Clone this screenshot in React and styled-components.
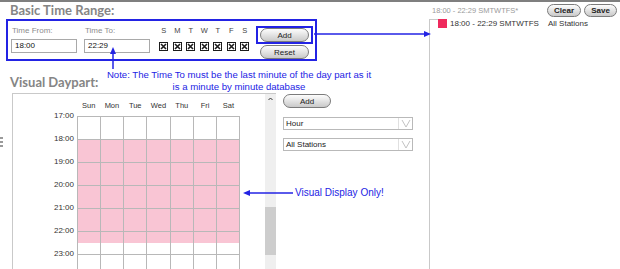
import styled, { createGlobalStyle } from "styled-components";

const GlobalStyle = createGlobalStyle`
    body {
        margin: 0;
        background: #fff;
        font-family: "Liberation Sans", Arial, sans-serif;
    }
`;

const BLUE = "#2323e4";

const Page = styled.div`
    position: relative;
    width: 620px;
    height: 269px;
    overflow: hidden;
    background: #fff;
`;

const TopRule = styled.div`
    height: 2px;
    background: #7f7f7f;
`;

const Main = styled.div`
    display: flex;
    height: 267px;
`;

const LeftCol = styled.div`
    width: 429px;
    display: flex;
    flex-direction: column;
`;

const SectionTitle = styled.div`
    padding-left: 10px;
    height: ${(p) => p.$h}px;
    line-height: ${(p) => p.$h}px;
    font-family: "Lato", "Open Sans", sans-serif;
    font-weight: 700;
    font-size: 13px;
    color: #858585;
    padding-top: ${(p) => p.$pt || 0}px;
`;

const FormBox = styled.div`
    margin-left: 6px;
    width: 311px;
    height: 43px;
    box-sizing: border-box;
    border: 2px solid ${BLUE};
    display: flex;
    align-items: flex-start;
    padding: 5px 2px 0 3px;
`;

const Field = styled.div`
    display: flex;
    flex-direction: column;
    width: 66px;
    margin-right: ${(p) => p.$mr || 0}px;
`;

const FieldLabel = styled.div`
    font-size: 8px;
    line-height: 10px;
    color: #8c8c8c;
    padding-left: 1px;
`;

const TextBox = styled.div`
    margin-top: 3px;
    height: 14px;
    box-sizing: border-box;
    border: 1px solid #a9a9a9;
    font-size: 8px;
    line-height: 12px;
    padding-left: 3px;
    color: #111;
`;

const Days = styled.div`
    display: grid;
    grid-template-columns: repeat(7, 13.5px);
    align-content: start;
    margin-left: 7px;
    justify-items: center;
`;

const DayLetter = styled.div`
    font-size: 7.5px;
    line-height: 10px;
    color: #444;
`;

const CheckCell = styled.div`
    margin-top: 6px;
    width: 9px;
    height: 9px;
    display: flex;
`;

const ButtonCol = styled.div`
    margin-left: auto;
    display: flex;
    flex-direction: column;
`;

const Highlight = styled.div`
    border: 2px solid ${BLUE};
    padding: 0 2px;
`;

const Button = styled.div`
    width: ${(p) => p.$w || 49}px;
    height: ${(p) => p.$h || 14}px;
    box-sizing: border-box;
    border: 1px solid #7b7b7b;
    border-radius: 7px;
    background: linear-gradient(#fdfdfd, #e6e6e6 45%, #c9c9c9);
    font-size: 8px;
    font-weight: ${(p) => (p.$bold ? 700 : 400)};
    color: #222;
    display: flex;
    align-items: center;
    justify-content: center;
    margin-left: ${(p) => p.$ml || 0}px;
    margin-top: ${(p) => p.$mt || 0}px;
`;

const Separator = styled.div`
    margin: 5px 0 0 12px;
    width: 406px;
    height: 1px;
    background: #bdbdbd;
`;

const ChartRow = styled.div`
    display: flex;
    flex: 1;
`;

const Grip = styled.div`
    width: 12px;
    padding-top: 44px;
    display: flex;
    flex-direction: column;
    gap: 2px;
`;

const GripDash = styled.div`
    width: 3px;
    height: 2px;
    background: #9a9a9a;
`;

const ChartPanel = styled.div`
    width: 263px;
    border-left: 1px solid #c9c9c9;
    border-top: 1px solid #c9c9c9;
    display: flex;
`;

const ChartContent = styled.div`
    flex: 1;
    display: flex;
    flex-direction: column;
`;

const DayHeader = styled.div`
    margin-left: 64px;
    width: 163px;
    height: 22px;
    display: grid;
    grid-template-columns: repeat(7, 1fr);
    align-items: center;
    justify-items: center;
`;

const DayName = styled.div`
    font-size: 7.5px;
    color: #333;
`;

const BodyRow = styled.div`
    display: flex;
`;

const HourLabels = styled.div`
    width: 64px;
    margin-top: -5px;
    display: flex;
    flex-direction: column;
`;

const HourLabel = styled.div`
    height: 23px;
    line-height: 10px;
    font-size: 8px;
    color: #333;
    text-align: right;
    padding-right: 3px;
`;

const Grid = styled.div`
    width: 163px;
    display: grid;
    grid-template-columns: repeat(7, 1fr);
    border-left: 1px solid #b8b8b8;
    border-top: 1px solid #b8b8b8;
    box-sizing: border-box;
`;

const Cell = styled.div`
    height: 23px;
    box-sizing: border-box;
    border-right: 1px solid #b8b8b8;
    border-bottom: 1px solid #b8b8b8;
    background: ${(p) =>
        p.$fill >= 1
            ? "#f9c5d4"
            : p.$fill > 0
            ? `linear-gradient(#f9c5d4 ${p.$fill * 100}%, #fff ${p.$fill * 100}%)`
            : "#fff"};
`;

const Scrollbar = styled.div`
    width: 11px;
    background: #efefef;
    display: flex;
    flex-direction: column;
    align-items: center;
`;

const ScrollThumb = styled.div`
    margin-top: 101px;
    width: 11px;
    height: 48px;
    background: #cdcdcd;
`;

const SideControls = styled.div`
    margin-left: 7px;
    padding-top: 1px;
    width: 130px;
    display: flex;
    flex-direction: column;
`;

const SelectBox = styled.div`
    margin-top: ${(p) => p.$mt}px;
    height: 13px;
    box-sizing: border-box;
    border: 1px solid #b9b9b9;
    display: flex;
    font-size: 8px;
    color: #222;
`;

const SelectText = styled.div`
    flex: 1;
    line-height: 11px;
    padding-left: 2px;
`;

const SelectArrow = styled.div`
    width: 13px;
    border-left: 1px solid #e0e0e0;
    display: flex;
    align-items: center;
    justify-content: center;
`;

const RightCol = styled.div`
    flex: 1;
    display: flex;
    flex-direction: column;
`;

const RightHeader = styled.div`
    height: 17px;
    display: flex;
    align-items: center;
    padding: 0 3px 0 3px;
    gap: 3px;
`;

const Summary = styled.div`
    flex: 1;
    font-size: 7.5px;
    color: #9a9a9a;
`;

const TreeBox = styled.div`
    flex: 1;
    border-left: 1px solid #c9c9c9;
`;

const TreeItem = styled.div`
    display: flex;
    align-items: flex-start;
    font-size: 8px;
    color: #333;
`;

const Connector = styled.div`
    width: 8px;
    height: 1px;
    background: #c9c9c9;
`;

const Swatch = styled.div`
    width: 9px;
    height: 9px;
    background: #ef2a5d;
    margin-right: 3px;
`;

const ItemText = styled.div`
    width: 98px;
    line-height: 10px;
`;

const Overlay = styled.svg`
    position: absolute;
    left: 0;
    top: 0;
    pointer-events: none;
`;

const Note = styled.div`
    position: absolute;
    left: ${(p) => p.$x}px;
    top: ${(p) => p.$y}px;
    width: ${(p) => p.$w}px;
    text-align: ${(p) => p.$align || "left"};
    font-size: ${(p) => p.$size || 10}px;
    line-height: 12px;
    color: ${BLUE};
`;

const days = ["Sun", "Mon", "Tue", "Wed", "Thu", "Fri", "Sat"];
const hours = [
    { h: "17:00", fill: 0 },
    { h: "18:00", fill: 1 },
    { h: "19:00", fill: 1 },
    { h: "20:00", fill: 1 },
    { h: "21:00", fill: 1 },
    { h: "22:00", fill: 0.5 },
    { h: "23:00", fill: 0 },
];

function CheckMark() {
    return (
        <svg width="9" height="9" viewBox="0 0 9 9">
            <rect x="0.5" y="0.5" width="8" height="8" fill="#fff" stroke="#1c1c1c" />
            <path d="M2 2L7 7M7 2L2 7" stroke="#1c1c1c" strokeWidth="1.6" />
        </svg>
    );
}

function Chevron() {
    return (
        <svg width="10" height="9" viewBox="0 0 10 9">
            <polyline points="1,1 5,8 9,1" fill="none" stroke="#c3c3c3" strokeWidth="1" />
        </svg>
    );
}

export default function App() {
    return (
        <Page>
            <GlobalStyle />
            <TopRule />
            <Main>
                <LeftCol>
                    <SectionTitle $h={17}>Basic Time Range:</SectionTitle>
                    <FormBox>
                        <Field $mr={7}>
                            <FieldLabel>Time From:</FieldLabel>
                            <TextBox>18:00</TextBox>
                        </Field>
                        <Field>
                            <FieldLabel>Time To:</FieldLabel>
                            <TextBox>22:29</TextBox>
                        </Field>
                        <Days>
                            {["S", "M", "T", "W", "T", "F", "S"].map((d, i) => (
                                <DayLetter key={"l" + i}>{d}</DayLetter>
                            ))}
                            {days.map((d) => (
                                <CheckCell key={d}>
                                    <CheckMark />
                                </CheckCell>
                            ))}
                        </Days>
                        <ButtonCol>
                            <Highlight>
                                <Button>Add</Button>
                            </Highlight>
                            <Button $ml={4} $mt={1}>
                                Reset
                            </Button>
                        </ButtonCol>
                    </FormBox>
                    <Separator />
                    <SectionTitle $h={22} $pt={5}>
                        Visual Daypart:
                    </SectionTitle>
                    <ChartRow>
                        <Grip>
                            <GripDash />
                            <GripDash />
                            <GripDash />
                        </Grip>
                        <ChartPanel>
                            <ChartContent>
                                <DayHeader>
                                    {days.map((d) => (
                                        <DayName key={d}>{d}</DayName>
                                    ))}
                                </DayHeader>
                                <BodyRow>
                                    <HourLabels>
                                        {hours.map((r) => (
                                            <HourLabel key={r.h}>{r.h}</HourLabel>
                                        ))}
                                    </HourLabels>
                                    <Grid>
                                        {hours.map((r) =>
                                            days.map((d) => <Cell key={r.h + d} $fill={r.fill} />)
                                        )}
                                    </Grid>
                                </BodyRow>
                            </ChartContent>
                            <Scrollbar>
                                <svg width="7" height="12" viewBox="0 0 7 12">
                                    <polyline points="1.5,6 3.5,4 5.5,6" fill="none" stroke="#333" strokeWidth="1" />
                                </svg>
                                <ScrollThumb />
                            </Scrollbar>
                        </ChartPanel>
                        <SideControls>
                            <Button $w={48}>Add</Button>
                            <SelectBox $mt={9}>
                                <SelectText>Hour</SelectText>
                                <SelectArrow>
                                    <Chevron />
                                </SelectArrow>
                            </SelectBox>
                            <SelectBox $mt={8}>
                                <SelectText>All Stations</SelectText>
                                <SelectArrow>
                                    <Chevron />
                                </SelectArrow>
                            </SelectBox>
                        </SideControls>
                    </ChartRow>
                </LeftCol>
                <RightCol>
                    <RightHeader>
                        <Summary>18:00 - 22:29 SMTWTFS*</Summary>
                        <Button $w={34} $h={13} $bold>
                            Clear
                        </Button>
                        <Button $w={33} $h={13} $bold>
                            Save
                        </Button>
                    </RightHeader>
                    <TreeBox>
                        <TreeItem>
                            <Connector />
                            <Swatch />
                            <ItemText>18:00 - 22:29 SMTWTFS</ItemText>
                            <div>All Stations</div>
                        </TreeItem>
                    </TreeBox>
                </RightCol>
            </Main>

            <Overlay width="620" height="269" viewBox="0 0 620 269">
                <g stroke={BLUE} strokeWidth="1.5" fill={BLUE}>
                    <line x1="314" y1="34" x2="425" y2="34" />
                    <polygon points="424,31 431,34 424,37" stroke="none" />
                    <line x1="113" y1="53" x2="113" y2="69" />
                    <polygon points="110,54 113,47 116,54" stroke="none" />
                    <line x1="293" y1="193" x2="249" y2="193" />
                    <polygon points="250,190 243,193 250,196" stroke="none" />
                </g>
            </Overlay>
            <Note $x={89} $y={69} $w={300} $align="center" $size={9.6}>
                Note: The Time To must be the last minute of the day part as it
                <br />
                is a minute by minute database
            </Note>
            <Note $x={295} $y={187} $w={120}>
                Visual Display Only!
            </Note>
        </Page>
    );
}
